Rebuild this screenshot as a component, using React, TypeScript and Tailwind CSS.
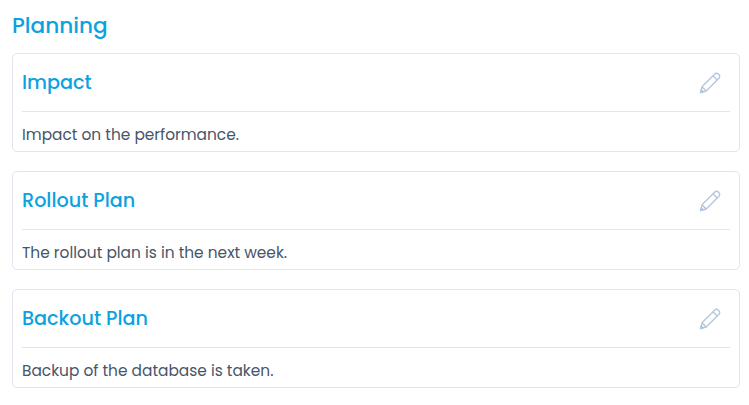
const font = "font-['Poppins','Inter','Noto_Sans',sans-serif]";

const items = [
  { title: 'Impact', body: 'Impact on the performance.' },
  { title: 'Rollout Plan', body: 'The rollout plan is in the next week.' },
  { title: 'Backout Plan', body: 'Backup of the database is taken.' },
];

function EditIcon() {
  return (
    <svg viewBox="0 0 22 22" className="w-[22px] h-[22px] mr-[9px]" fill="none" stroke="#b4c5de" strokeWidth="1.3" strokeLinejoin="round">
      <path d="M1.5 20.5 L3 14.8 L15.8 2 C16.8 1 18.3 1 19.3 2 L20 2.7 C21 3.7 21 5.2 20 6.2 L7.2 19 Z" />
      <path d="M14 3.8 L18.2 8" />
      <path d="M3 14.8 L7.2 19" />
      <path d="M1.5 20.5 L2.2 17.8 L4.2 19.8 Z" fill="#b4c5de" />
    </svg>
  );
}

export default function App() {
  return (
    <div className={`w-[749px] h-[405px] bg-white px-3 pt-[11px] overflow-hidden ${font}`}>
      <h2 className="text-[21.6px] font-medium leading-[30px] text-[#0ba2e0] mb-[12px]">Planning</h2>
      <div className="flex flex-col gap-[19px] w-[728px]">
        {items.map((item) => (
          <div key={item.title} className="border border-[#e2e5ee] rounded-[5px] px-[9px] h-[99px]">
            <div className="flex items-center justify-between h-[58px] border-b border-[#e2e5ee]">
              <span className="text-[19.2px] leading-[30px] pt-[1px] font-medium text-[#0ba2e0]">{item.title}</span>
              <EditIcon />
            </div>
            <p className="text-[15.4px] leading-[46px] h-[40px] text-[#475569]">{item.body}</p>
          </div>
        ))}
      </div>
    </div>
  );
}
